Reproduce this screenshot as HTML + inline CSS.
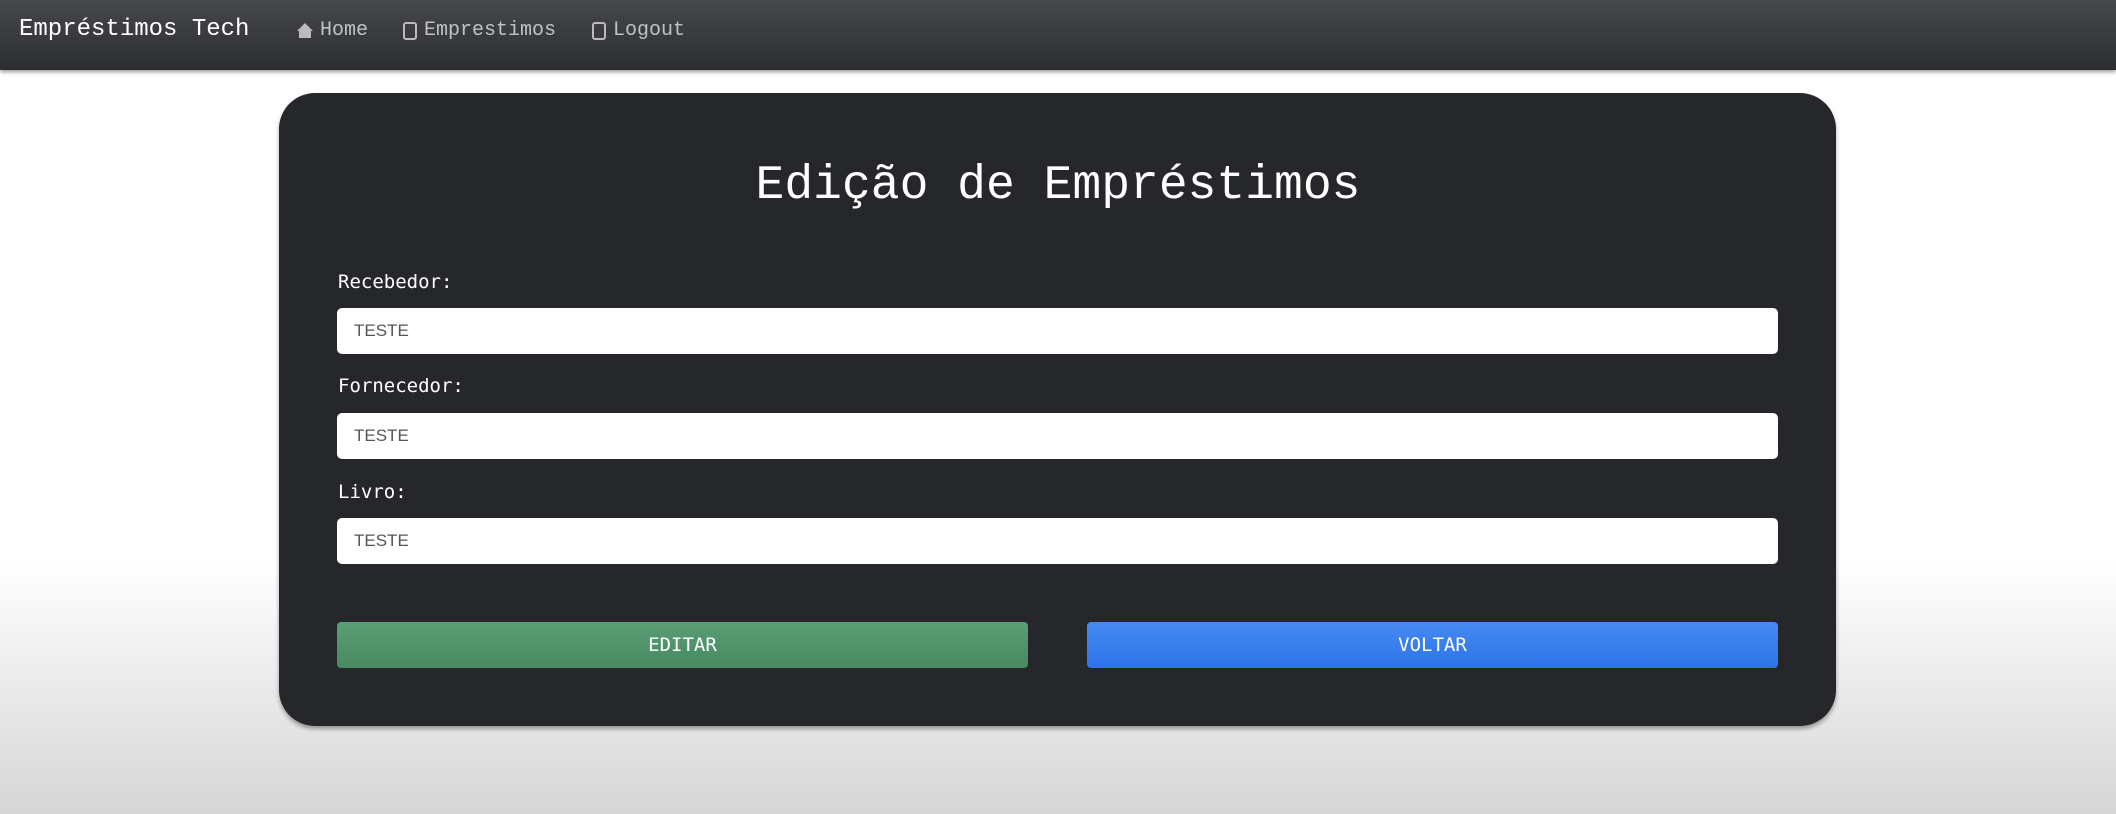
<!DOCTYPE html>
<html><head><meta charset="utf-8"><style>
*{box-sizing:border-box;margin:0;padding:0}
body{width:2116px;height:814px;overflow:hidden;font-family:"Liberation Mono",monospace;background:linear-gradient(#fff 0,#fff 560px,#d6d6d6 814px);position:relative}
.nav{position:absolute;left:0;top:0;width:2116px;height:70px;background:linear-gradient(#46484c,#2b2d31);box-shadow:0 2px 4px rgba(0,0,0,.4)}
.brand{position:absolute;left:19px;top:16px;font-size:24px;color:#fff}
.link{position:absolute;top:19px;font-size:20px;color:#bfc1c4;display:flex;align-items:center;gap:6px}
.card{position:absolute;left:279px;top:93px;width:1557px;height:633px;background:#25272b;border-radius:36px;box-shadow:0 3px 4px rgba(0,0,0,.35)}
h1{position:absolute;left:0;width:100%;top:156px;text-align:center;font-weight:normal;font-size:48px;color:#fff;line-height:60px}
.lbl{position:absolute;left:338px;font-size:19px;color:#fff;font-family:"DejaVu Sans Mono",monospace}
.inp{position:absolute;left:337px;width:1441px;height:46px;background:#fff;border-radius:5px;font-family:"Liberation Sans Narrow","Liberation Sans",sans-serif;font-size:17px;color:#555;padding:13px 17px}
.btn{position:absolute;top:622px;height:46px;width:691px;border-radius:4px;color:#fff;font-size:19px;text-align:center;line-height:46px;font-family:"DejaVu Sans Mono",monospace}
</style></head><body>
<div class="nav">
<div class="brand">Empréstimos Tech</div>
<div class="link" style="left:296px"><svg width="18" height="17" viewBox="0 0 18 17"><path d="M9 1L1 9h2v7h12V9h2z" fill="#bbb"/></svg>Home</div>
<div class="link" style="left:402px"><svg width="16" height="20" viewBox="0 0 16 20"><rect x="2" y="2" width="12" height="16" rx="2" fill="none" stroke="#bbb" stroke-width="2"/></svg>Emprestimos</div>
<div class="link" style="left:591px"><svg width="16" height="20" viewBox="0 0 16 20"><rect x="2" y="2" width="12" height="16" rx="2" fill="none" stroke="#bbb" stroke-width="2"/></svg>Logout</div>
</div>
<div class="card"></div>
<h1>Edição de Empréstimos</h1>
<div class="lbl" style="top:271px">Recebedor:</div>
<div class="inp" style="top:308px">TESTE</div>
<div class="lbl" style="top:375px">Fornecedor:</div>
<div class="inp" style="top:413px">TESTE</div>
<div class="lbl" style="top:481px">Livro:</div>
<div class="inp" style="top:518px">TESTE</div>
<div class="btn" style="left:337px;background:linear-gradient(#5a9e76,#478a62)">EDITAR</div>
<div class="btn" style="left:1087px;background:linear-gradient(#4689f2,#2c74e8)">VOLTAR</div>
</body></html>
